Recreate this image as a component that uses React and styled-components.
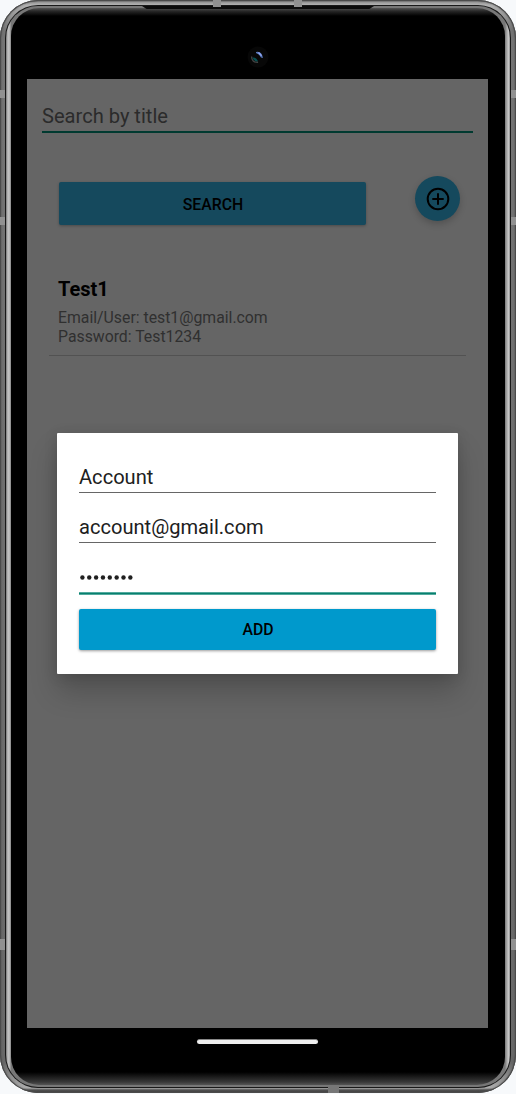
import React from "react";
import styled, { createGlobalStyle } from "styled-components";

const GlobalStyle = createGlobalStyle`
  * { box-sizing: border-box; }
  body { margin: 0; background: #f7f9fb; font-family: Roboto, sans-serif; overflow: hidden; }
`;

const Shell = styled.main`
  position: relative;
  width: 516px;
  height: 1093px;
  padding: 5px;
  border-radius: 38px;
  overflow: hidden;
  background: linear-gradient(#666 0, #999 2px, #b2b2b2 5px, #747474 30px, #686868 calc(100% - 30px), #aaa calc(100% - 6px), #aaa calc(100% - 5px), #505050 calc(100% - 3px), #3d3d3d);
  box-shadow: inset 0 0 0 1px #4b4b4b, inset 0 0 2px 1px #4b4b4b;
`;

const Seam = styled.div`
  height: 100%;
  padding: 1px;
  border-radius: 33px;
  background: #191919;
`;

const Rim = styled.div`
  height: 100%;
  padding: 2px 5px;
  border-radius: 32px;
  background: linear-gradient(90deg, #777 0, #c4c4c4 2px, #b3b3b3 4px, #777 5px, #777 499px, #aaa 501px, #ccc 503px, #777);
`;

const Bezel = styled.div`
  display: flex;
  flex-direction: column;
  height: 100%;
  padding: 0 17px 0 16px;
  border-radius: 28px;
  background: linear-gradient(#555 0, #292929 3px, #000 8px, #000 calc(100% - 13px), #383838 calc(100% - 3px), #555);
`;

const TopBezel = styled.div`
  display: flex;
  flex: 0 0 71px;
  justify-content: center;
  padding-top: 38px;
`;

const BottomBezel = styled.div`
  display: flex;
  justify-content: center;
  padding-top: 11px;
`;

const HomeBar = styled.div`
  width: 121px;
  height: 5px;
  border-radius: 3px;
  background: #eee;
  border-top: 1px solid #888;
`;

const Screen = styled.section`
  position: relative;
  flex: 0 0 949px;
  padding: 15px 15px 0;
  background: #656565;
  overflow: hidden;
`;

const SearchInput = styled.div`
  height: 39px;
  padding-top: 10px;
  border-bottom: 2px solid #003a30;
  color: #2b2b2b;
  font-size: 20.1px;
  line-height: 24px;
`;

const SearchActions = styled.div`
  display: flex;
  justify-content: space-between;
  align-items: flex-end;
  height: 88px;
  padding: 0 13px 0 17px;
`;

const Button = styled.button`
  width: ${p => p.$width};
  height: ${p => p.$height};
  padding: 1px 0 0 1px;
  border: 0;
  border-radius: 2px;
  background: #0099cc;
  box-shadow: 0 1px 3px #0006;
  color: #000;
  font: 500 15.8px/20px Roboto, sans-serif;
`;

const SearchButton = styled(Button)`
  margin-bottom: -4px;
  padding-top: 3px;
  background: #15495d;
  box-shadow: 0 1px 3px #0004;
`;

const AddCircle = styled.button`
  display: grid;
  place-items: center;
  width: 45px;
  height: 45px;
  padding: 0;
  border: 0;
  border-radius: 50%;
  background: #15495d;
  box-shadow: 0 3px 7px #0003;
`;

const AccountRow = styled.article`
  display: flex;
  flex-direction: column;
  height: 80px;
  margin: 55px 7px 0;
  padding: 0 9px;
  border-bottom: 1px solid #525252;
  color: #303030;
  font-size: 15.8px;
  line-height: 18.5px;
`;

const AccountTitle = styled.h2`
  margin: 0 0 7px;
  color: #000;
  font: 700 20px/26px Roboto, sans-serif;
`;

const Detail = styled.div``;

const DialogLayer = styled.div`
  position: absolute;
  inset: 0;
  display: grid;
  place-items: center;
`;

const Dialog = styled.div`
  display: flex;
  flex-direction: column;
  width: 401px;
  height: 241px;
  padding: 22px;
  border-radius: 1px;
  background: #fff;
  box-shadow: 0 18px 28px #0003, 0 2px 14px #0002;
`;

const Field = styled.div`
  display: flex;
  flex-direction: column;
  justify-content: flex-end;
  height: ${p => p.$height || "50px"};
  padding-bottom: 3px;
  border-bottom: 1px solid #666;
  color: #202020;
  font-size: 20.1px;
  line-height: 24px;
`;

const PasswordField = styled(Field)`
  padding-bottom: 13px;
  border-bottom: 0;
  background: linear-gradient(#52aa9e 0 1px, #087f6e 1px 2px, #52aa9e 2px) bottom / 100% 3px no-repeat;
`;

const DialogActions = styled.div`
  padding-top: 14px;
`;

const PasswordDots = styled.svg`
  display: block;
  margin-bottom: 2px;
`;

const Camera = styled.svg`
  display: block;
`;

const SideRail = styled.div`
  position: absolute;
  inset: 0 ${p => p.$right ? "0 0 auto" : "auto 0 0"};
  display: flex;
  flex-direction: column;
  width: 5px;
  padding-top: 90px;
`;

const TopRail = styled.div`
  position: absolute;
  inset: 0 0 auto;
  display: flex;
  justify-content: center;
  gap: 73px;
  padding-right: 2px;
`;

const BottomRail = styled.div`
  position: absolute;
  inset: auto 0 0;
  display: flex;
  justify-content: flex-end;
  padding-right: 177px;
`;

const Antenna = styled.i`
  width: ${p => p.$width || 5}px;
  height: ${p => p.$height || 8}px;
  margin-bottom: ${p => p.$gap || 0}px;
  background: ${p => p.$dark ? "#777" : "#919191"};
`;

const EarpieceLayer = styled.div`
  position: absolute;
  inset: 6px 0 auto;
  display: flex;
  justify-content: center;
`;

const Earpiece = styled.i`
  width: 232px;
  height: 3px;
  background: #0c0c0c;
  clip-path: polygon(0 0, 100% 0, 98% 100%, 2% 100%);
`;

const Antennas = ({ right }) => (
  <SideRail $right={right}>
    <Antenna $gap={119} />
    <Antenna $gap={714} />
    <Antenna $height={11} />
  </SideRail>
);

export default function App() {
  return (
    <>
      <GlobalStyle />
      <Shell>
        <Seam><Rim><Bezel>
          <TopBezel>
            <Camera width="22" height="22" viewBox="0 0 22 22">
              <circle cx="11" cy="11" r="10.5" fill="#070707" />
              <path d="M4.6 10.5q0 6 6.5 5.7" stroke="#444" strokeWidth="1.4" fill="none" />
              <path d="M5.5 11.5q4-.5 5.5 4-4.5 0-5.5-4z" fill="#075052" />
              <path d="M9 6q5.5-1.5 7 6l-2-.6q-1.5-3-5-4.4z" fill="#5877b8" />
              <path d="m11.5 6.5 3 3.3" stroke="#91a6f2" strokeWidth="1.4" />
            </Camera>
          </TopBezel>
          <Screen>
            <SearchInput>Search by title</SearchInput>
            <SearchActions>
              <SearchButton $width="307px" $height="43px">SEARCH</SearchButton>
              <AddCircle aria-label="Add account">
                <svg width="24" height="24" viewBox="0 0 24 24" fill="none" stroke="#000" strokeWidth="2">
                  <circle cx="12" cy="12" r="10.3" /><path d="M6.3 12h11.4M12 6.3v11.4" />
                </svg>
              </AddCircle>
            </SearchActions>
            <AccountRow>
              <AccountTitle>Test1</AccountTitle>
              <Detail>Email/User: test1@gmail.com</Detail>
              <Detail>Password: Test1234</Detail>
            </AccountRow>
            <DialogLayer>
              <Dialog>
                <Field $height="38px">Account</Field>
                <Field>account@gmail.com</Field>
                <PasswordField $height="52px">
                  <PasswordDots width="56" height="5" viewBox="0 0 56 5" fill="#202020">
                    {[0, 1, 2, 3, 4, 5, 6, 7].map(i => <circle key={i} cx={3.4 + i * 6.85} cy="2.5" r="2.2" />)}
                  </PasswordDots>
                </PasswordField>
                <DialogActions><Button $width="357px" $height="41px">ADD</Button></DialogActions>
              </Dialog>
            </DialogLayer>
          </Screen>
          <BottomBezel><HomeBar /></BottomBezel>
        </Bezel></Rim></Seam>
        <EarpieceLayer><Earpiece /></EarpieceLayer>
        <TopRail><Antenna $width={8} $height={7} /><Antenna $width={8} $height={7} /></TopRail>
        <Antennas />
        <Antennas right />
        <BottomRail><Antenna $dark $width={11} $height={6} /></BottomRail>
      </Shell>
    </>
  );
}
